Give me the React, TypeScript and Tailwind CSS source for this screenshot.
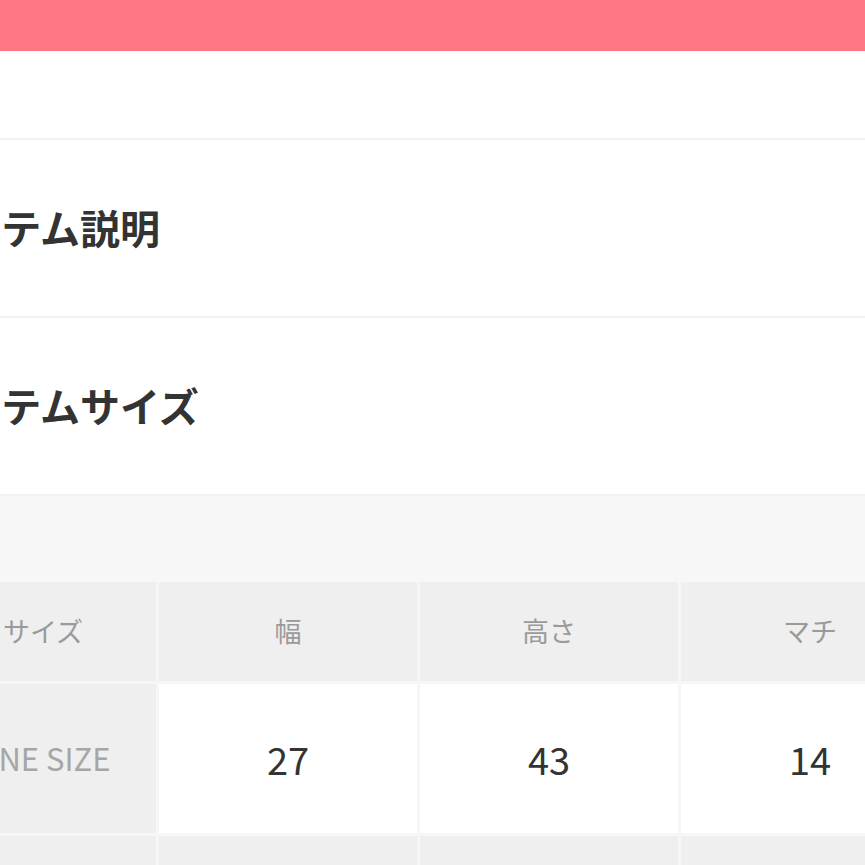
const JP = "font-['Noto_Sans_CJK_JP','Noto_Sans',sans-serif]";

const HEAD = ["サイズ", "幅", "高さ", "マチ"];
const ROW = ["ONE SIZE", "27", "43", "14"];

function Section({ title }: { title: string }) {
  return (
    <div className="flex h-[178px] items-center border-b-2 border-[#f1f1f1] bg-white pb-[3px]">
      <h2 className="-ml-[76px] text-[40px] font-semibold leading-none text-[#333]">{title}</h2>
    </div>
  );
}

export default function App() {
  return (
    <div className={`h-[865px] w-[865px] overflow-hidden bg-white ${JP}`}>
      {/* top banner */}
      <div className="h-[51px] bg-[#ff7782]" />
      <div className="h-[89px] border-b-2 border-[#f1f1f1] bg-white" />

      <Section title="アイテム説明" />
      <Section title="アイテムサイズ" />

      {/* size table */}
      <div className="bg-[#f7f7f7] pt-[86px]">
        <div className="-ml-[70px] grid w-[1020px] grid-cols-[226px_258px_258px_258px] gap-[3px] bg-[#f6f6f6]">
          {HEAD.map((h) => (
            <div key={h} className="flex h-[99px] items-center justify-center bg-[#efefef] text-[27px] text-[#9a9a9a]">
              {h}
            </div>
          ))}
          {ROW.map((v, i) => (
            <div
              key={v}
              className={
                i === 0
                  ? "flex h-[149px] items-center justify-center bg-[#efefef] text-[31px] text-[#a6a6a6]"
                  : "flex h-[149px] items-center justify-center bg-white text-[38px] text-[#333]"
              }
            >
              {v}
            </div>
          ))}
          {HEAD.map((h) => (
            <div key={h + "-3"} className="h-[60px] bg-[#efefef]" />
          ))}
        </div>
      </div>
    </div>
  );
}
